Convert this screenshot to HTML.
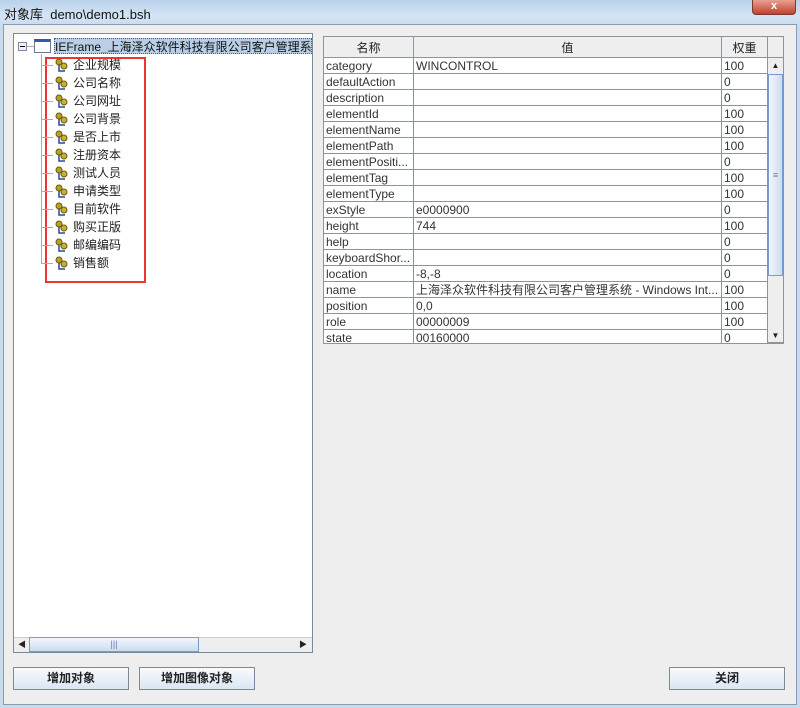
<!DOCTYPE html>
<html><head><meta charset="utf-8"><style>
*{box-sizing:border-box;margin:0;padding:0}
body{width:800px;height:708px;position:relative;overflow:hidden;background:#c9dcef;font-family:"Liberation Sans","Noto Sans CJK SC",sans-serif;font-size:12px;color:#222}
.a{position:absolute}
.title{left:0;top:0;width:800px;height:26px;background:linear-gradient(180deg,#b9d1ea,#d4e4f4 60%,#c8dbef);}
.body{left:3px;top:24px;width:794px;height:681px;background:#eeeeee;border:1px solid #8a9bb0}
.tree{left:13px;top:33px;width:300px;height:620px;background:#fff;border:1px solid #7a8a99}
.node{position:absolute;left:73px;font-size:12px;height:16px;line-height:16px}
table{border-collapse:collapse;position:absolute;left:0;top:0;font-size:12px;table-layout:fixed}
td{border:1px solid #8c959e;height:16px;padding:0 2px;line-height:14px;white-space:nowrap;overflow:hidden;color:#333;background:#fff}
th{border:1px solid #8c959e;height:21px;font-weight:normal;background:#eeeeee;color:#222}
.btn{height:23px;border:1px solid #7a8a9a;background:linear-gradient(#f8fbff,#dbe6f3);font-weight:bold;text-align:center;line-height:21px;font-size:12px}
</style></head><body>
<div class="a title"></div>
<div class="a" style="left:4px;top:4px;font-size:13px;color:#111">对象库&nbsp; demo\demo1.bsh</div>
<div class="a" style="left:752px;top:0;width:44px;height:15px;background:linear-gradient(#e8a090,#c0432e);border:1px solid #7a3a30;border-top:none;border-radius:0 0 4px 4px;color:#fff;text-align:center;font-weight:bold;font-size:11px;line-height:13px">x</div>
<div class="a body"></div>
<div class="a tree">
 <div class="a" style="left:4px;top:8px;width:9px;height:9px;border:1px solid #7a8a99;background:#eef"><div style="position:absolute;left:1px;top:3px;width:5px;height:1px;background:#000"></div></div>
 <div class="a" style="left:13px;top:12px;width:7px;height:1px;background:#aab"></div>
 <div class="a" style="left:20px;top:5px;width:17px;height:14px;border:1px solid #6a7a8a;border-top:3px solid #2a5cb0;background:#fff"></div>
 <div class="a" style="left:40px;top:4px;width:258px;height:16px;background:#b8cfe5;line-height:16px;white-space:nowrap;overflow:hidden;color:#111;font-size:12px;border:1px dotted #557">IEFrame_上海泽众软件科技有限公司客户管理系统</div>
 <div class="a" style="left:27px;top:20px;width:1px;height:210px;background:#aab"></div>
</div>
<div class="a" style="left:45px;top:57px;width:101px;height:226px;border:2px solid #ee3333"></div>
<div id="nodes"></div>
<div class="a" style="left:14px;top:637px;width:298px;height:15px;background:#eee;border-top:1px solid #ccc"></div>
<div class="a" style="left:15px;top:638px;width:14px;height:13px;font-size:8px;line-height:13px;text-align:center">◀</div>
<div class="a" style="left:29px;top:637px;width:170px;height:15px;border:1px solid #7a9ad0;background:linear-gradient(#f2f6fc,#cddcf0);text-align:center;font-size:9px;line-height:13px;color:#6a80a8">|||</div>
<div class="a" style="left:296px;top:638px;width:14px;height:13px;font-size:8px;line-height:13px;text-align:center">▶</div>
<div class="a" style="left:323px;top:36px;width:445px;height:307px;overflow:hidden">
<table>
<colgroup><col style="width:90px"><col style="width:308px"><col style="width:46px"></colgroup>
<tr><th>名称</th><th>值</th><th>权重</th></tr>
<tr><td>category</td><td>WINCONTROL</td><td>100</td></tr>
<tr><td>defaultAction</td><td></td><td>0</td></tr>
<tr><td>description</td><td></td><td>0</td></tr>
<tr><td>elementId</td><td></td><td>100</td></tr>
<tr><td>elementName</td><td></td><td>100</td></tr>
<tr><td>elementPath</td><td></td><td>100</td></tr>
<tr><td>elementPositi...</td><td></td><td>0</td></tr>
<tr><td>elementTag</td><td></td><td>100</td></tr>
<tr><td>elementType</td><td></td><td>100</td></tr>
<tr><td>exStyle</td><td>e0000900</td><td>0</td></tr>
<tr><td>height</td><td>744</td><td>100</td></tr>
<tr><td>help</td><td></td><td>0</td></tr>
<tr><td>keyboardShor...</td><td></td><td>0</td></tr>
<tr><td>location</td><td>-8,-8</td><td>0</td></tr>
<tr><td>name</td><td>上海泽众软件科技有限公司客户管理系统 - Windows Int...</td><td>100</td></tr>
<tr><td>position</td><td>0,0</td><td>100</td></tr>
<tr><td>role</td><td>00000009</td><td>100</td></tr>
<tr><td>state</td><td>00160000</td><td>0</td></tr>
</table>
</div>
<div class="a" style="left:767px;top:36px;width:17px;height:22px;background:#eee;border:1px solid #8c959e"></div>
<div class="a" style="left:767px;top:57px;width:17px;height:286px;background:#eee;border:1px solid #8c959e"></div>
<div class="a" style="left:768px;top:58px;width:15px;height:15px;font-size:8px;text-align:center;line-height:15px">▲</div>
<div class="a" style="left:768px;top:74px;width:15px;height:202px;border:1px solid #7a9ad0;background:linear-gradient(90deg,#f2f6fc,#cddcf0);text-align:center;line-height:200px;font-size:9px;color:#6a80a8">≡</div>
<div class="a" style="left:768px;top:328px;width:15px;height:15px;font-size:8px;text-align:center;line-height:15px">▼</div>
<div class="a" style="left:323px;top:343px;width:461px;height:1px;background:#8c959e"></div>
<div class="a btn" style="left:13px;top:667px;width:116px">增加对象</div>
<div class="a btn" style="left:139px;top:667px;width:116px">增加图像对象</div>
<div class="a btn" style="left:669px;top:667px;width:116px">关闭</div>
<script>
var n=["企业规模","公司名称","公司网址","公司背景","是否上市","注册资本","测试人员","申请类型","目前软件","购买正版","邮编编码","销售额"],h="";
n.forEach(function(t,i){var y=57+i*18;
h+='<div class="a" style="left:41px;top:'+(y+8)+'px;width:12px;height:1px;background:#aab"></div>';
h+='<svg class="a" style="left:54px;top:'+(y+1)+'px" width="14" height="14"><circle cx="5" cy="4" r="3" fill="#b8a020" stroke="#6a5a10"/><circle cx="10" cy="8" r="3" fill="#c8b030" stroke="#6a5a10"/><path d="M5 7v6h6" stroke="#2a4a9a" fill="none" stroke-width="1.5"/></svg>';
h+='<div class="node" style="top:'+y+'px">'+t+'</div>';});
document.getElementById("nodes").innerHTML=h;
</script>
</body></html>
